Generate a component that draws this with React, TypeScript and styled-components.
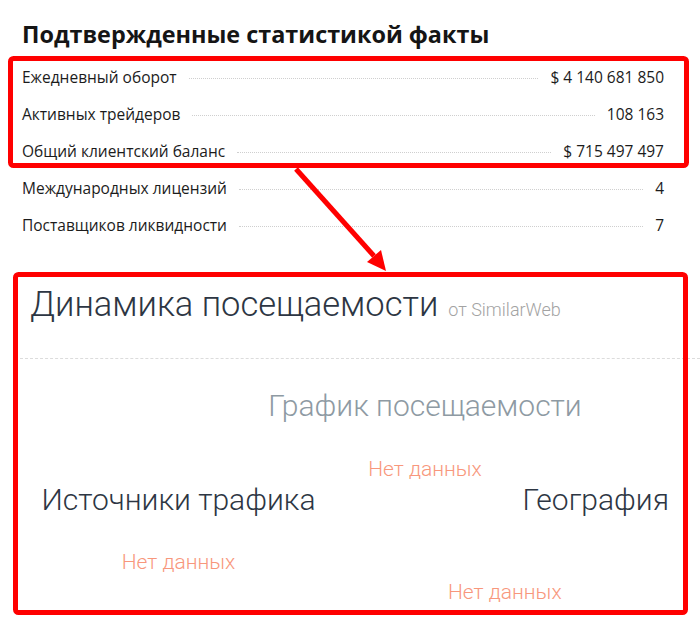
import * as React from 'react';
import styled, { createGlobalStyle } from 'styled-components';

const GlobalStyle = createGlobalStyle`
  html, body {
    margin: 0;
    padding: 0;
    background: #fff;
  }
`;

const Page = styled.div`
  position: relative;
  width: 700px;
  height: 622px;
  overflow: hidden;
  padding-left: 20px;
  box-sizing: border-box;
`;

const FactsTitle = styled.h2`
  margin: 0;
  padding: 19px 0 7px 2px;
  font-family: 'Open Sans', 'Noto Sans', sans-serif;
  font-weight: 700;
  font-size: 23.4px;
  line-height: 30px;
  color: #151515;
`;

const StatList = styled.div`
  display: flex;
  flex-direction: column;
  gap: 13px;
  padding: 0 36px 0 2px;
`;

const StatGroup = styled.div`
  display: flex;
  flex-direction: column;
  gap: 13px;
  padding-top: 9px;
`;

const StatRow = styled.div`
  display: flex;
  align-items: center;
  height: 24px;
  font-family: 'Open Sans', 'Noto Sans', sans-serif;
  font-size: 15.5px;
  color: #1c1c1c;
`;

const Leader = styled.span`
  flex: 1;
  margin: 3px 12px 0;
  border-bottom: 1px dotted #cfcfcf;
`;

const StatValue = styled.span`
  white-space: nowrap;
`;

const Panel = styled.section`
  margin-top: 37px;
  font-family: Roboto, 'Liberation Sans', sans-serif;
  font-weight: 300;
`;

const PanelHead = styled.div`
  display: flex;
  align-items: baseline;
  gap: 10px;
  padding: 8px 0 32px 10px;
  border-bottom: 1px dashed #dcdcdc;
`;

const PanelTitle = styled.span`
  font-size: 34.5px;
  line-height: 44px;
  color: #2d3643;
`;

const PanelSource = styled.span`
  font-size: 18px;
  color: #a3a3a3;
`;

const ChartBlock = styled.div`
  display: flex;
  flex-direction: column;
  align-items: center;
  width: 510px;
  margin: 29px 0 0 150px;
`;

const BlockTitle = styled.div<{ $muted?: boolean }>`
  font-size: 30px;
  line-height: 36px;
  color: ${p => (p.$muted ? '#8e9aa3' : '#2d3643')};
  white-space: nowrap;
`;

const NoData = styled.div<{ $top: number; $shift?: number }>`
  margin-top: ${p => p.$top}px;
  margin-left: ${p => p.$shift || 0}px;
  font-size: 21px;
  line-height: 24px;
  color: #f8977c;
  white-space: nowrap;
`;

const Columns = styled.div`
  display: grid;
  grid-template-columns: 317px 1fr;
  margin-top: 1px;
`;

const Column = styled.div<{ $end?: boolean }>`
  display: flex;
  flex-direction: column;
  align-items: ${p => (p.$end ? 'flex-end' : 'center')};
  padding-right: ${p => (p.$end ? '31px' : '0')};
`;

const Annotations = styled.svg`
  position: absolute;
  top: 0;
  left: 0;
  pointer-events: none;
`;

const facts = [
  { label: 'Ежедневный оборот', value: '$ 4 140 681 850' },
  { label: 'Активных трейдеров', value: '108 163' },
  { label: 'Общий клиентский баланс', value: '$ 715 497 497' },
  { label: 'Международных лицензий', value: '4' },
  { label: 'Поставщиков ликвидности', value: '7' },
];

const Fact = ({ label, value }: { label: string; value: string }) => (
  <StatRow>
    <span>{label}</span>
    <Leader />
    <StatValue>{value}</StatValue>
  </StatRow>
);

export default function App() {
  return (
    <Page>
      <GlobalStyle />
      <FactsTitle>Подтвержденные статистикой факты</FactsTitle>
      <StatList>
        <StatGroup>
          {facts.slice(0, 3).map(f => (
            <Fact key={f.label} {...f} />
          ))}
        </StatGroup>
        {facts.slice(3).map(f => (
          <Fact key={f.label} {...f} />
        ))}
      </StatList>

      <Panel>
        <PanelHead>
          <PanelTitle>Динамика посещаемости</PanelTitle>
          <PanelSource>от SimilarWeb</PanelSource>
        </PanelHead>
        <ChartBlock>
          <BlockTitle $muted>График посещаемости</BlockTitle>
          <NoData $top={33}>Нет данных</NoData>
        </ChartBlock>
        <Columns>
          <Column>
            <BlockTitle>Источники трафика</BlockTitle>
            <NoData $top={32}>Нет данных</NoData>
          </Column>
          <Column $end>
            <BlockTitle>География</BlockTitle>
            <NoData $top={62} style={{ alignSelf: 'flex-start' }} $shift={111}>
              Нет данных
            </NoData>
          </Column>
        </Columns>
      </Panel>

      <Annotations width="700" height="622" viewBox="0 0 700 622">
        <rect x="10.5" y="58.5" width="676" height="107" rx="3" fill="none" stroke="#ff0000" strokeWidth="5" />
        <rect x="15.5" y="274.5" width="670" height="338" rx="3" fill="none" stroke="#ff0000" strokeWidth="5" />
        <line x1="296" y1="169" x2="374" y2="256" stroke="#ff0000" strokeWidth="5" />
        <polygon points="386,271 367,262 381,250" fill="#ff0000" />
      </Annotations>
    </Page>
  );
}
